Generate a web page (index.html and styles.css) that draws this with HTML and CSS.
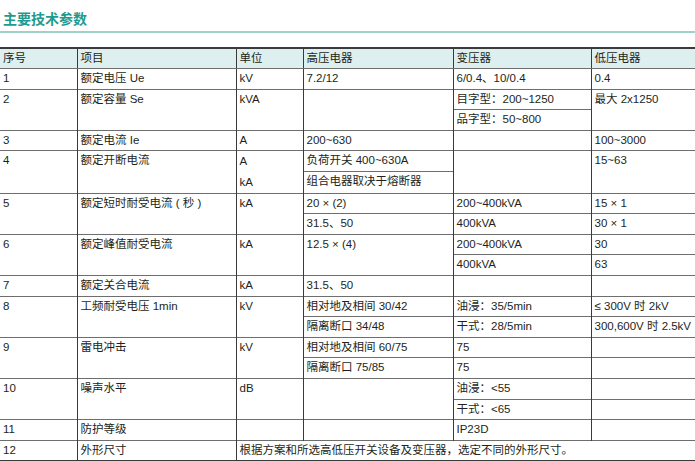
FILE: index.html
```html
<!DOCTYPE html>
<html lang="zh-CN">
<head>
<meta charset="utf-8">
<title>主要技术参数</title>
<link rel="stylesheet" href="styles.css">
</head>
<body>
<div class="page">
  <h1 class="title">主要技术参数</h1>
  <table class="spec">
    <colgroup>
      <col class="w1"><col class="w2"><col class="w3"><col class="w4"><col class="w5"><col class="w6">
    </colgroup>
    <thead>
      <tr><th>序号</th><th>项目</th><th>单位</th><th>高压电器</th><th>变压器</th><th>低压电器</th></tr>
    </thead>
    <tbody>
      <tr class="major"><td>1</td><td>额定电压 Ue</td><td>kV</td><td>7.2/12</td><td>6/0.4、10/0.4</td><td>0.4</td></tr>

      <tr class="major"><td rowspan="2">2</td><td rowspan="2">额定容量 Se</td><td rowspan="2">kVA</td><td rowspan="2"></td><td>目字型：200~1250</td><td rowspan="2">最大 2x1250</td></tr>
      <tr><td>品字型：50~800</td></tr>

      <tr class="major"><td>3</td><td>额定电流 Ie</td><td>A</td><td>200~630</td><td></td><td>100~3000</td></tr>

      <tr class="major"><td rowspan="2">4</td><td rowspan="2">额定开断电流</td><td rowspan="2" class="stack">A<br>kA</td><td>负荷开关 400~630A</td><td rowspan="2"></td><td rowspan="2">15~63</td></tr>
      <tr><td>组合电器取决于熔断器</td></tr>

      <tr class="major"><td rowspan="2">5</td><td rowspan="2">额定短时耐受电流 ( 秒 )</td><td rowspan="2">kA</td><td>20 × (2)</td><td>200~400kVA</td><td>15 × 1</td></tr>
      <tr><td>31.5、50</td><td>400kVA</td><td>30 × 1</td></tr>

      <tr class="major"><td rowspan="2">6</td><td rowspan="2">额定峰值耐受电流</td><td rowspan="2">kA</td><td rowspan="2">12.5 × (4)</td><td>200~400kVA</td><td>30</td></tr>
      <tr><td>400kVA</td><td>63</td></tr>

      <tr class="major"><td>7</td><td>额定关合电流</td><td>kA</td><td>31.5、50</td><td></td><td></td></tr>

      <tr class="major"><td rowspan="2">8</td><td rowspan="2">工频耐受电压 1min</td><td rowspan="2">kV</td><td>相对地及相间 30/42</td><td>油浸：35/5min</td><td>≤ 300V 时 2kV</td></tr>
      <tr><td>隔离断口 34/48</td><td>干式：28/5min</td><td>300,600V 时 2.5kV</td></tr>

      <tr class="major"><td rowspan="2">9</td><td rowspan="2">雷电冲击</td><td rowspan="2">kV</td><td>相对地及相间 60/75</td><td>75</td><td></td></tr>
      <tr><td>隔离断口 75/85</td><td>75</td><td></td></tr>

      <tr class="major"><td rowspan="2">10</td><td rowspan="2">噪声水平</td><td rowspan="2">dB</td><td rowspan="2"></td><td>油浸：&lt;55</td><td></td></tr>
      <tr><td>干式：&lt;65</td><td></td></tr>

      <tr class="major"><td>11</td><td>防护等级</td><td></td><td></td><td>IP23D</td><td></td></tr>

      <tr class="major last"><td>12</td><td>外形尺寸</td><td colspan="4">根据方案和所选高低压开关设备及变压器，选定不同的外形尺寸。</td></tr>
    </tbody>
  </table>
</div>
</body>
</html>
```

FILE: styles.css
```css
html, body {
  margin: 0;
  padding: 0;
  background: #ffffff;
}

.page {
  width: 695px;
  font-family: "Liberation Sans", "Noto Sans CJK SC", sans-serif;
  color: #231f20;
}

.title {
  margin: 0;
  padding: 8px 3px 3px;
  height: 20px;
  line-height: 20px;
  font-size: 14px;
  font-weight: bold;
  color: #1f9a8e;
  font-family: "Noto Sans CJK SC", "Liberation Sans", sans-serif;
  border-bottom: 2px solid #9fd0cc;
}

.spec {
  margin-top: 14px;
  width: 695px;
  table-layout: fixed;
  border-collapse: collapse;
  font-size: 11.5px;
}

.w1 { width: 77px; }
.w2 { width: 159px; }
.w3 { width: 67px; }
.w4 { width: 150px; }
.w5 { width: 138px; }
.w6 { width: 104px; }

.spec th,
.spec td {
  padding: 0 3px;
  line-height: 19.6px;
  height: 19.6px;
  vertical-align: top;
  text-align: left;
  font-weight: normal;
  white-space: nowrap;
  overflow: hidden;
  border-top: 1px solid #6e6e6e;
  border-left: 1px solid #3a3a3a;
}

.spec td.stack {
  line-height: 20.6px;
}

.spec th:first-child,
.spec tbody tr.major td:first-child {
  border-left: none;
}

.spec th {
  height: 19px;
  line-height: 19px;
  background: #ddefee;
  border-top: 2px solid #3a3a3a;
  border-bottom: 1px solid #6e6e6e;
}

.spec tr.last td {
  border-bottom: 2px solid #3a3a3a;
}
```
